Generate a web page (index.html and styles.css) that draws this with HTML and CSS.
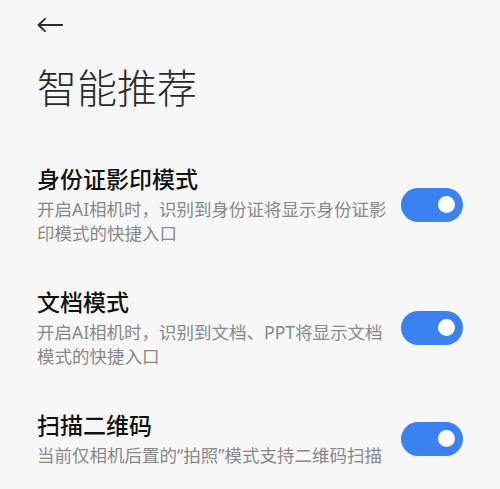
FILE: index.html
```html
<!DOCTYPE html>
<html lang="zh-CN">
<head>
    <meta charset="UTF-8">
    <meta name="viewport" content="width=device-width, initial-scale=1.0">
    <title>智能推荐</title>
    <link rel="stylesheet" href="styles.css">
</head>
<body>

    <header class="top-bar">
        <a class="back" href="#" aria-label="返回">
            <svg width="26" height="14" viewBox="0 0 26 14">
                <path d="M1.5 7 H25.5 M8 0.8 L1.5 7 L8 13.2" fill="none" stroke="#2b2b2b" stroke-width="1.8" stroke-linecap="round" stroke-linejoin="round"/>
            </svg>
        </a>
    </header>

    <h1 class="page-title">智能推荐</h1>

    <section class="settings">
        <div class="setting">
            <div class="setting-text">
                <h2>身份证影印模式</h2>
                <p>开启AI相机时，识别到身份证将显示身份证影印模式的快捷入口</p>
            </div>
            <span class="toggle on"><span class="knob"></span></span>
        </div>

        <div class="setting">
            <div class="setting-text">
                <h2>文档模式</h2>
                <p>开启AI相机时，识别到文档、PPT将显示文档模式的快捷入口</p>
            </div>
            <span class="toggle on"><span class="knob"></span></span>
        </div>

        <div class="setting">
            <div class="setting-text">
                <h2>扫描二维码</h2>
                <p>当前仅相机后置的“拍照”模式支持二维码扫描</p>
            </div>
            <span class="toggle on"><span class="knob"></span></span>
        </div>
    </section>

</body>
</html>
```

FILE: styles.css
```css
body {
    font-family: "Noto Sans", "Noto Sans CJK SC", sans-serif;
    margin: 0;
    padding: 0;
    background-color: #f7f7f7;
    color: #111;
}

.top-bar {
    height: 50px;
    padding: 0 37px;
    display: flex;
    align-items: center;
}

.back {
    display: flex;
}

.page-title {
    margin: 18px 0 0;
    padding: 0 37px;
    font-size: 40px;
    line-height: 40px;
    font-weight: 300;
    color: #2a2a2a;
}

.settings {
    margin-top: 56px;
    padding: 0 37px;
    display: flex;
    flex-direction: column;
    gap: 42px;
}

.setting {
    display: flex;
    align-items: center;
    gap: 8px;
}

.setting-text {
    flex: 1;
}

.setting-text h2 {
    margin: 0;
    font-size: 23px;
    line-height: 30px;
    font-weight: 500;
    color: #111;
}

.setting-text p {
    margin: 3px 0 0;
    font-size: 17.5px;
    line-height: 24px;
    color: #888;
}

.toggle {
    flex: none;
    width: 62px;
    height: 34px;
    border-radius: 17px;
    box-sizing: border-box;
    padding: 0 8px;
    display: flex;
    align-items: center;
    justify-content: flex-end;
    background-color: #ccc;
}

.toggle.on {
    background-color: #3b82f0;
}

.knob {
    width: 17px;
    height: 17px;
    border-radius: 50%;
    background-color: #fff;
}
```
